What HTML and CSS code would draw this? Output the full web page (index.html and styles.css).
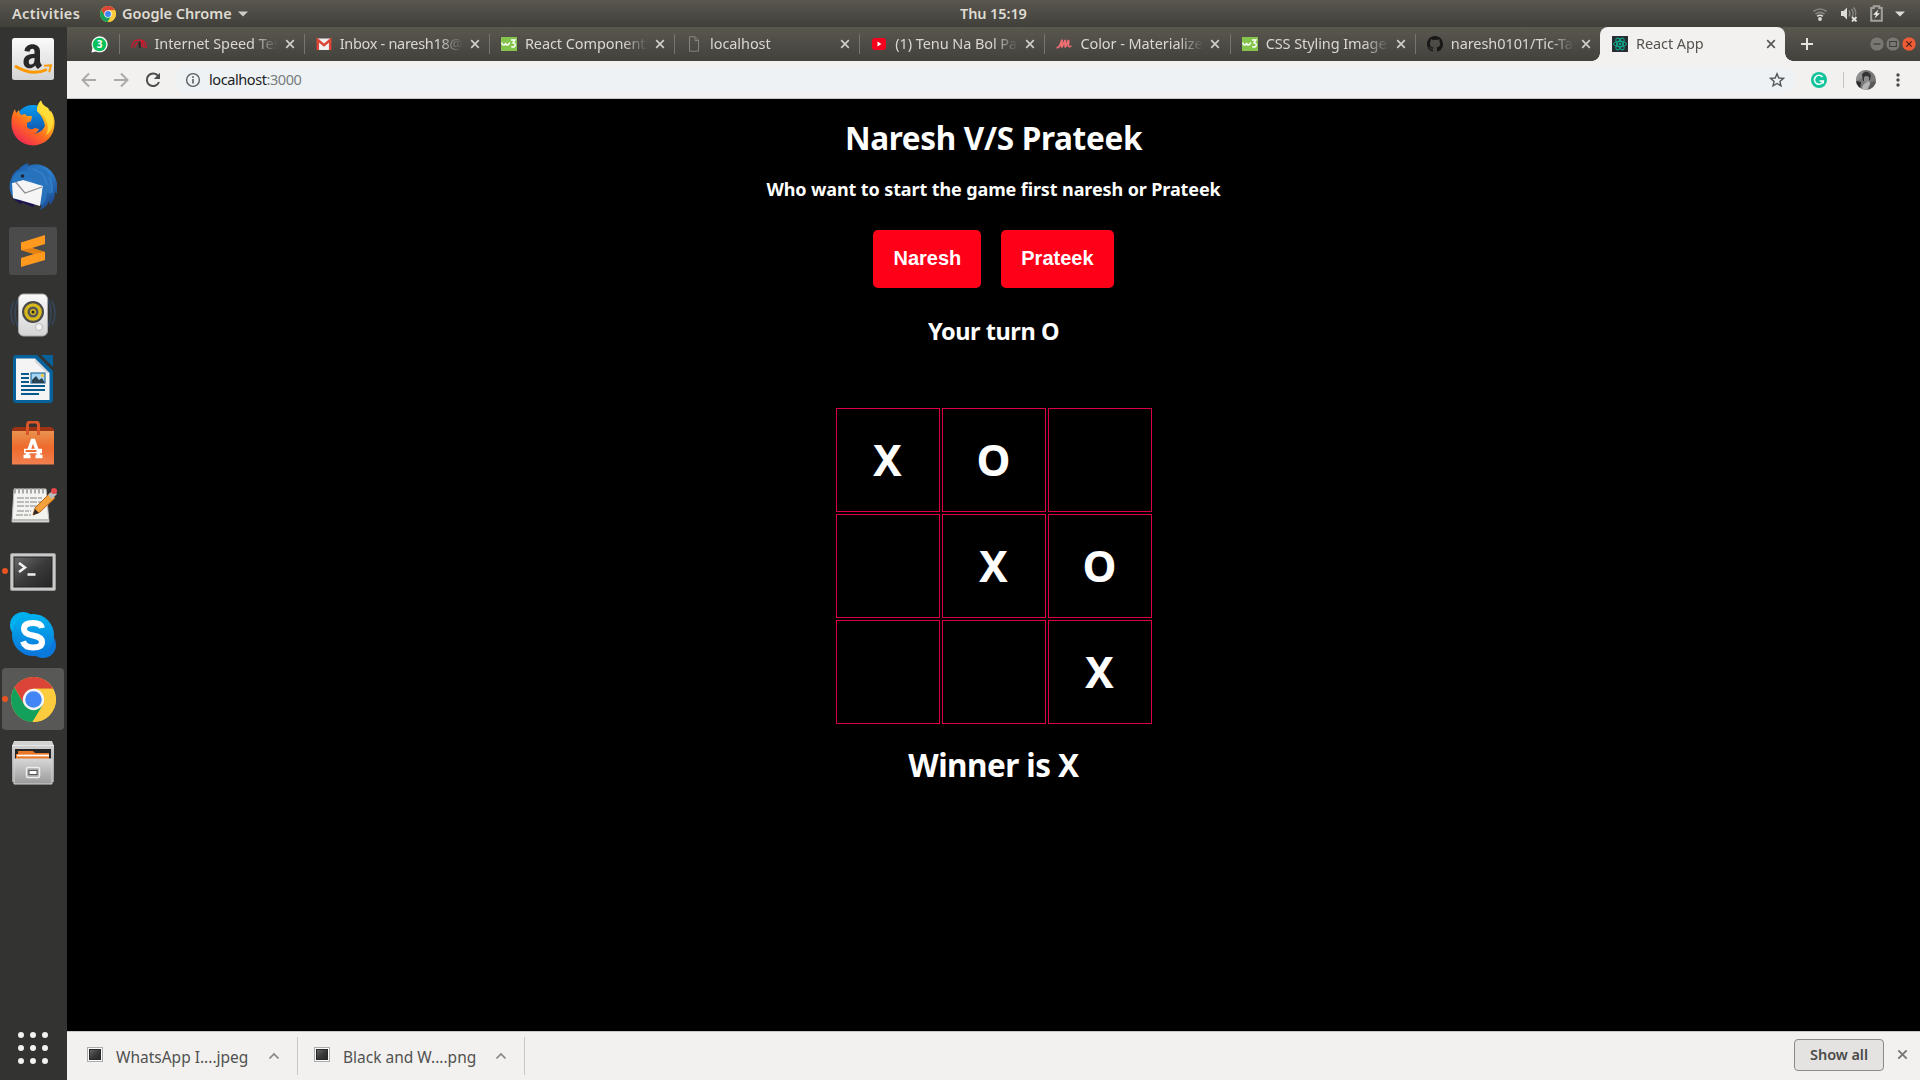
FILE: index.html
```
<!DOCTYPE html>
<html lang="en">
<head>
<meta charset="utf-8">
<title>React App</title>
<link rel="stylesheet" href="styles.css">
</head>
<body>
<svg class="defs" width="0" height="0">
  <defs>
    <linearGradient id="gPaper" x2="0" y2="1"><stop offset="0" stop-color="#fafafa"/><stop offset="1" stop-color="#d4d4d4"/></linearGradient>
    <linearGradient id="gFox" x1="0.9" y1="0" x2="0.2" y2="1"><stop offset="0" stop-color="#fff04a"/><stop offset=".35" stop-color="#ffb81c"/><stop offset=".62" stop-color="#ff6a1f"/><stop offset="1" stop-color="#f0205a"/></linearGradient>
    <linearGradient id="gGlobe" x2="0" y2="1"><stop offset="0" stop-color="#0a9cf0"/><stop offset="1" stop-color="#123c94"/></linearGradient>
    <linearGradient id="gBird" x1="0" x2="1" y2="1"><stop offset="0" stop-color="#16539f"/><stop offset=".5" stop-color="#2f82d0"/><stop offset="1" stop-color="#173a80"/></linearGradient>
    <linearGradient id="gBag" x2="0" y2="1"><stop offset="0" stop-color="#e9924f"/><stop offset=".5" stop-color="#ee6a2c"/><stop offset="1" stop-color="#f08050"/></linearGradient>
    <linearGradient id="gTerm" x1="0" x2="1" y2="1"><stop offset="0" stop-color="#6b6b6b"/><stop offset=".5" stop-color="#3a3a3a"/><stop offset="1" stop-color="#242424"/></linearGradient>
    <linearGradient id="gSkype" x2="0" y2="1"><stop offset="0" stop-color="#00b4f0"/><stop offset="1" stop-color="#0a74da"/></linearGradient>
    <linearGradient id="gCab" x2="0" y2="1"><stop offset="0" stop-color="#d6d6d6"/><stop offset="1" stop-color="#9a9a9a"/></linearGradient>
    <symbol id="chrome" viewBox="0 0 44 44">
      <circle cx="22" cy="22" r="22" fill="#f9cb3c"/>
      <path d="M22 22L3.5 10A22 22 0 0 1 41.2 11.5H22Z" fill="#db4437"/>
      <path d="M3.5 10.2A22 22 0 0 0 21 44L31.5 27 12.5 26Z" fill="#12a05b"/>
      <path d="M22 11.5h19.2A22 22 0 0 1 21 44L31.5 27Z" fill="#fccb3e"/>
      <path d="M3.5 10.2L12.5 26 22 11.5Z" fill="#db4437"/>
      <circle cx="22" cy="22" r="10.4" fill="#f4f4f4"/><circle cx="22" cy="22" r="8.1" fill="#4285f4"/>
    </symbol>
    <symbol id="w3" viewBox="0 0 16 14">
      <rect width="16" height="14" fill="#84c44c"/>
      <path d="M.7 5.500Q1.300 8.500 3 8 4.500 7.500 4.600 5.800 5 8.500 6.500 8 8 7.500 8.800 5.500M10 3h4L12 5.800Q14.600 6.200 14.200 8.500 13.500 11 10.300 9.500" fill="none" stroke="#fff" stroke-width="1.400"/>
    </symbol>
    <symbol id="close" viewBox="0 0 10 10"><path d="M1.2 1.2l7.6 7.6M8.8 1.2L1.2 8.8" fill="none" stroke="currentColor" stroke-width="1.7"/></symbol>
    <symbol id="picture" viewBox="0 0 16 15"><rect x=".5" y=".5" width="15" height="14" fill="#fafafa" stroke="#aaacae"/><rect x="2.500" y="2.500" width="11" height="10" fill="url(#gTerm)" stroke="#292929"/></symbol>
    <symbol id="up" viewBox="0 0 12 8"><path d="M1.5 6.5L6 2l4.500 4.500" fill="none" stroke="#858585" stroke-width="1.700"/></symbol>
  </defs>
</svg>

<div class="desktop">
  <header class="topbar">
    <div class="topbar-left">
      <span class="activities">Activities</span>
      <svg width="16" height="16"><use href="#chrome"/></svg>
      <span class="app-name">Google Chrome</span>
      <svg width="10" height="6" viewBox="0 0 10 6"><path d="M0 .5h10L5 5.500Z" fill="#cfcdc8"/></svg>
    </div>
    <div class="clock">Thu 15:19</div>
    <div class="topbar-right">
      <svg width="16" height="16" viewBox="0 0 16 16" fill="none" stroke-width="1.700"><path d="M1.500 5.500Q8 .5 14.500 5.500M3.500 8.200Q8 4.600 12.500 8.200" stroke="#85837d"/><path d="M5.200 10.200Q8 8.300 10.800 10.200" stroke="#dedcd7"/><circle cx="8" cy="13" r="1.900" fill="#dedcd7"/></svg>
      <svg width="18" height="16" viewBox="0 0 18 16" fill="none"><path d="M1 5h2.500L7 1.500v12L3.500 10H1Z" fill="#dedcd7"/><path d="M9 4.500q2 3 0 6M11.500 3q3 4 .5 8M13.500 1.500q3.500 4 1.800 8" stroke="#8b8983" stroke-width="1.300"/><path d="M12 11l4.500 4.500M16.500 11L12 15.500" stroke="#e4e2dd" stroke-width="1.800"/></svg>
      <svg width="13" height="17" viewBox="0 0 13 17"><path d="M1.200 3h2.500V1.300h5.600V3h2.500v12.700H1.200Z" fill="none" stroke="#a3a19b" stroke-width="2"/><path d="M8.500 4.500L3 9.800h3L4.500 13.500 10 8.300H7Z" fill="#efeeea"/></svg>
      <svg width="10" height="6" viewBox="0 0 10 6"><path d="M0 .5h10L5 5.500Z" fill="#dedcd7"/></svg>
    </div>
  </header>

  <div class="workspace">
    <nav class="dock">
      <div class="dock-item"><svg width="44" height="44" viewBox="0 0 44 44"><rect x="1" y="1" width="42" height="42" rx="2.500" fill="url(#gPaper)"/><path d="M13.500 14C14 5 29 5 29 14v10q0 2.500 2 4.500l-4 3.500q-2-1.500-2.800-3.500C20 33.500 12.500 31.500 12.500 25c0-6.500 5.500-8 11-8.200V14.500c0-3.800-4.400-3.500-5 .2Zm10 7c-3.500 0-5.700 1-5.700 4 0 4 5.700 3.500 5.700-2Z" fill="#282828"/><path d="M4 29q17 10.500 32 3.500" fill="none" stroke="#ff9900" stroke-width="3"/><path d="M33 28.800l7-.5-1.800 7" fill="none" stroke="#ff9900" stroke-width="2"/></svg></div>
      <div class="dock-item"><svg width="46" height="46" viewBox="0 0 46 46"><circle cx="23" cy="23" r="18" fill="url(#gGlobe)"/><path d="M27 11Q27 4 31 .5 32 5 38 8l1 4 2-1q4 6 3.500 13A21.500 21.500 0 0 1 1.500 24Q1 15 5 9l1 4 3-3q0 3 2 5l4-1 2 2h5l-1 5-4 2v4q3 4 8 1l4 1q-2 5-8 5Q31 34 35 26 34 18 27 11Z" fill="url(#gFox)"/><path d="M27 11Q27 4 31 .5 32 5 38 8q6 7 5 16-1 7-7 11 4-8 0-15Q34 15 27 11Z" fill="#ffe13a" opacity=".8"/></svg></div>
      <div class="dock-item"><svg width="48" height="48" viewBox="0 0 48 48"><path d="M10 6Q15 0 20 .5L18 3Q32-2 42 8 50 17 48 31l-2-2q0 8-5 13l-1-4q-2 6-9 9l2-5H22L5 36Q-2 26 2 16 4 9 10 6Z" fill="url(#gBird)"/><path d="M4 36l9 6-1-3 12 5 4-6Z" fill="#1b1450"/><path d="M3 20L14 17 34 23 31 43 4 35Z" fill="#f5f5f6"/><path d="M5 17L16 30 33 24" fill="none" stroke="#8a8d94" stroke-width="1.200"/><path d="M9 9Q20 6 19 13L13 17 3 20Q3 13 9 9Z" fill="#2576bd"/><circle cx="13.500" cy="13" r="1.800" fill="#223"/><path d="M19 12Q26 24 34 21L32 43Q38 37 38 29l4 2Q45 18 38 8 29 2 18 4Z" fill="#2871bb"/><path d="M24 6q12 3 14 16M40 14q4 8 3 16" stroke="#3480c8" stroke-width="1.500" fill="none"/></svg></div>
      <div class="dock-item"><svg width="48" height="48" viewBox="0 0 48 48"><rect width="48" height="48" rx="3" fill="#4b4b4b"/><path d="M12 15.500L36 8v9L23 21l13 4v8L12 40v-9l13-4-13-4Z" fill="#ff9a1f"/><path d="M12 23l13 4 11-2-13-4Z" fill="#e47f12"/></svg></div>
      <div class="dock-item"><svg width="48" height="48" viewBox="0 0 48 48"><g fill="none" stroke="#36465a" stroke-width="1.700"><path d="M9 8q-6 14 0 28M5 10q-6 12 0 24M39 8q6 14 0 28M43 10q6 12 0 24"/></g><rect x="9.500" y="3" width="29" height="42" rx="5" fill="url(#gPaper)" stroke="#a8a8a8"/><circle cx="24" cy="21" r="11" fill="#4b4b4b"/><circle cx="24" cy="21" r="8.800" fill="#d8b91c"/><circle cx="24" cy="21" r="5.500" fill="#565656"/><circle cx="24" cy="21" r="3" fill="#d8b91c"/><circle cx="24" cy="21" r="1.500" fill="#222"/><circle cx="30" cy="36" r="3.500" fill="#f2f2f2" stroke="#bbb"/></svg></div>
      <div class="dock-item"><svg width="42" height="48" viewBox="0 0 42 48"><path d="M4 0H25L41 16V44q0 4-3 4H4q-3 0-3-4V4q0-4 3-4Z" fill="#07629c"/><path d="M29 0h12v12Z" fill="#07629c"/><path d="M4 3.500H23L37.500 18V45H4Z" fill="#f4f4f4"/><path d="M23 3.500L37.500 18H35L23 7Z" fill="#cfd4d8"/><g stroke="#075a8c" stroke-width="2"><path d="M9 19h8M9 23h8M9 27h8M9 31h24M9 35h24M9 39h18"/></g><rect x="19" y="18" width="14" height="10" fill="#a6d4f2" stroke="#075a8c"/><path d="M20 28v-3l4-4 3 4 3-2 3 5Z" fill="#2a4350"/><circle cx="30.500" cy="20.500" r="1.700" fill="#f5c542"/></svg></div>
      <div class="dock-item"><svg width="44" height="44" viewBox="0 0 44 44"><path d="M1 8l3-2h36l3 2v4H1Z" fill="#9c3414"/><rect x="1" y="10" width="42" height="33.500" fill="url(#gBag)"/><path d="M16.500 14V4q0-3 3-3h5q3 0 3 3v10" fill="none" stroke="#d9552a" stroke-width="3"/><path d="M12.500 35.500h7M24.500 35.500h7M15.500 36L21.300 19.500h1.400L28.500 36" fill="none" stroke="#fff" stroke-width="3.500"/><path d="M13 30h18" stroke="#fff" stroke-width="4.500"/><path d="M14.500 30h11" stroke="#eb6e32" stroke-width="2"/></svg></div>
      <div class="dock-item"><svg class="notes" width="48" height="38" viewBox="0 0 48 38"><path d="M5 3h32l3 33H3Z" fill="#f3f3f0" stroke="#bbb"/><path d="M3.500 34h36" stroke="#bdbdb8" stroke-width="2"/><path d="M5 5h32" stroke="#aaa" stroke-width="5" stroke-dasharray="2 2"/><path d="M8 12h26M8 16h24M8 20h22M8 25h14M7 29h15" stroke="#aaa" stroke-width="1.300" stroke-dasharray="7 1 4 1"/><path d="M24 29l2-7L41 7l5 5-15 14Z" fill="#f2a13c" stroke="#bc661c"/><path d="M24 29l2-6 4 4Z" fill="#2b2b2b"/><path d="M39 9l5-5 4 4-5 5Z" fill="#b8bdc0"/><circle cx="45" cy="5" r="3" fill="#e4494c"/></svg></div>
      <div class="dock-item running"><svg class="terminal" width="46" height="38" viewBox="0 0 46 38"><rect x=".5" y=".5" width="45" height="37" rx="1.500" fill="#c9c9c7" stroke="#9a9a9a"/><rect x="4" y="4" width="38" height="30" fill="url(#gTerm)" stroke="#222"/><path d="M9 10l6 4.500-6 4.500M17.500 21.500h8" fill="none" stroke="#f1f1f1" stroke-width="2.500"/></svg></div>
      <div class="dock-item"><svg width="46" height="46" viewBox="0 0 46 46"><circle cx="13" cy="13" r="13" fill="#00b0ee"/><circle cx="33" cy="33" r="13" fill="#0b78db"/><circle cx="23" cy="23" r="21" fill="url(#gSkype)"/><path d="M32 16Q31 11 23 11q-9 0-9 6 0 5 9 6.500 9 1.500 9 6.500 0 5.500-9 5.500-8 0-10-6" fill="none" stroke="#fff" stroke-width="6"/></svg></div>
      <div class="dock-item running focused"><svg width="45" height="45"><use href="#chrome"/></svg></div>
      <div class="dock-item"><svg width="42" height="44" viewBox="0 0 42 44"><path d="M2 0h38l2 5v36H0V5Z" fill="url(#gCab)"/><path d="M0 4.500h42" stroke="#e8e8e8"/><rect x="3" y="8" width="36" height="10" fill="#252525"/><path d="M6 10h15l2 2h14v8H4v-7h2Z" fill="#e97826"/><path d="M5 14.500h32" stroke="#fff" stroke-width="1.700"/><path d="M2 18h38v25H2Z" fill="url(#gCab)" stroke="#d5d5d5"/><rect x="14.500" y="26.500" width="13" height="10" rx="1.500" fill="#aaa" stroke="#eee" stroke-width="1.500"/><rect x="17" y="29.500" width="8" height="4" fill="#fff" stroke="#555"/></svg></div>
      <div class="apps"><i></i><i></i><i></i><i></i><i></i><i></i><i></i><i></i><i></i></div>
    </nav>

    <main class="browser">
      <div class="tabs">
        <div class="pinned"><svg width="17" height="17" viewBox="0 0 17 17"><path d="M.5 16.500L1.500 12A8 8 0 1 1 5 15.500Z" fill="#fff"/><circle cx="8.500" cy="8.500" r="6.800" fill="#09c15a"/><text x="8.500" y="12.200" class="badge">3</text></svg></div>
        <div class="tab"><svg width="16" height="16" viewBox="0 0 16 16"><path d="M.8 12Q.5 4.300 8 4T15.200 12M4 11.500Q4 7.500 7.500 7M10 4.500q3.200 3 3 7.500M9.500 6.500q1.500 2 1.500 4.500" fill="none" stroke="#cf1830" stroke-width="1.300"/><path d="M7.500 6h2v6H8Z" fill="#222"/></svg><span class="title">Internet Speed Test</span><svg class="x"><use href="#close"/></svg></div>
        <div class="tab"><svg width="16" height="16" viewBox="0 0 16 16"><path d="M1 2.500h14v11.500H1Z" fill="#f1efef"/><path d="M1.800 14V4L8 9.200 14.200 4v10" fill="none" stroke="#dc4436" stroke-width="2.500"/></svg><span class="title tight">Inbox - naresh18@</span><svg class="x"><use href="#close"/></svg></div>
        <div class="tab"><svg width="16" height="16"><use href="#w3"/></svg><span class="title">React Components</span><svg class="x"><use href="#close"/></svg></div>
        <div class="tab"><svg width="16" height="16" viewBox="0 0 16 16"><path d="M3.500 .7h5.500l3.500 3.500v11h-9ZM9 1v3.500h3.500" fill="none" stroke="#85837d"/></svg><span class="title">localhost</span><svg class="x"><use href="#close"/></svg></div>
        <div class="tab"><svg width="16" height="16" viewBox="0 0 16 16"><rect x="1" y="2" width="14" height="12" rx="3" fill="#f5001d"/><path d="M6.500 5.500v5L10.500 8Z" fill="#fff"/></svg><span class="title">(1) Tenu Na Bol Pa</span><svg class="x"><use href="#close"/></svg></div>
        <div class="tab"><svg width="16" height="16" viewBox="0 0 16 16"><path d="M.5 11.500Q3 12 4 9l1.500-4Q6.500 3 6 6L5.500 10Q5.500 12 6.500 10L8.500 5.500Q9.800 3 9.300 6L9 10Q9 12 10 10L11.800 5.500Q13 3 12.700 6L12.300 9.500Q12.500 11.500 15.500 10" fill="none" stroke="#ee6e73" stroke-width="1.700"/></svg><span class="title">Color - Materialize</span><svg class="x"><use href="#close"/></svg></div>
        <div class="tab"><svg width="16" height="16"><use href="#w3"/></svg><span class="title">CSS Styling Images</span><svg class="x"><use href="#close"/></svg></div>
        <div class="tab"><svg width="16" height="16" viewBox="0 0 16 16"><path d="M8 0C3.580 0 0 3.580 0 8c0 3.540 2.290 6.530 5.470 7.590.4.070.55-.17.55-.38 0-.19-.01-.82-.01-1.490-2.010.37-2.530-.49-2.690-.94-.09-.23-.48-.94-.82-1.130-.28-.15-.68-.52-.01-.53.63-.01 1.080.58 1.230.82.72 1.210 1.870.87 2.330.66.070-.52.280-.87.510-1.070-1.780-.2-3.640-.89-3.640-3.950 0-.87.310-1.590.820-2.150-.08-.2-.36-1.020.080-2.120 0 0 .67-.21 2.200.82.640-.18 1.320-.27 2-.27s1.360.09 2 .27c1.530-1.040 2.200-.82 2.200-.82.440 1.100.160 1.920.080 2.120.510.56.820 1.270.820 2.150 0 3.070-1.870 3.750-3.650 3.950.290.25.540.73.540 1.480 0 1.070-.010 1.930-.010 2.200 0 .21.150.46.550.38A8 8 0 0 0 16 8c0-4.420-3.580-8-8-8Z" fill="#191717"/></svg><span class="title">naresh0101/Tic-Tac</span><svg class="x"><use href="#close"/></svg></div>
        <div class="tab active"><svg width="16" height="16" viewBox="0 0 16 16"><rect width="16" height="16" fill="#282c34"/><g fill="none" stroke="#0fae8e"><ellipse cx="8" cy="8" rx="6.500" ry="2.600"/><ellipse cx="8" cy="8" rx="6.500" ry="2.600" transform="rotate(60 8 8)"/><ellipse cx="8" cy="8" rx="6.500" ry="2.600" transform="rotate(120 8 8)"/></g><circle cx="8" cy="8" r="1.200" fill="#0fae8e"/></svg><span class="title">React App</span><svg class="x"><use href="#close"/></svg></div>
        <svg class="new-tab" width="12" height="12" viewBox="0 0 12 12"><path d="M6 0v12M0 6h12" stroke="#e6e4df" stroke-width="2"/></svg>
        <div class="window-controls">
          <svg width="14" height="14" viewBox="0 0 14 14"><circle cx="7" cy="7" r="6.600" fill="#7a7872"/><path d="M3.500 7h7" stroke="#3d3c38" stroke-width="1.200"/></svg>
          <svg width="14" height="14" viewBox="0 0 14 14"><circle cx="7" cy="7" r="6.600" fill="#7a7872"/><rect x="3.700" y="4.500" width="6.600" height="5" fill="none" stroke="#3d3c38"/></svg>
          <svg width="14" height="14" viewBox="0 0 14 14"><circle cx="7" cy="7" r="6.700" fill="#ee5c36"/><path d="M4.300 4.300l5.400 5.400M9.700 4.300L4.300 9.700" stroke="#4a2016" stroke-width="1.200"/></svg>
        </div>
      </div>

      <div class="toolbar">
        <div class="nav-buttons">
          <svg width="16" height="16" viewBox="0 0 16 16"><path d="M15 8H2M8 1.500L1.500 8 8 14.500" fill="none" stroke="#aaa9a7" stroke-width="1.900"/></svg>
          <svg width="16" height="16" viewBox="0 0 16 16"><path d="M1 8h13M8 1.500L14.500 8 8 14.500" fill="none" stroke="#aaa9a7" stroke-width="1.900"/></svg>
          <svg width="16" height="16" viewBox="0 0 16 16"><path d="M13.200 4A6.300 6.300 0 1 0 14 10" fill="none" stroke="#4c4c4c" stroke-width="2"/><path d="M15 .8v6.200H8.800Z" fill="#4c4c4c"/></svg>
        </div>
        <div class="omnibox">
          <svg width="16" height="16" viewBox="0 0 16 16"><circle cx="8" cy="8" r="6.400" fill="none" stroke="#5a5e60" stroke-width="1.400"/><path d="M8 7v4.500M8 4.300v1.600" stroke="#5a5e60" stroke-width="1.600"/></svg>
          <span class="url">localhost<span class="port">:3000</span></span>
          <svg class="star" width="16" height="16" viewBox="0 0 16 16"><path d="M8 1.800l1.800 4.200 4.700.4-3.600 3 1.100 4.500L8 11.500 4 13.900l1.100-4.500-3.600-3 4.700-.4Z" fill="none" stroke="#50575b" stroke-width="1.400"/></svg>
        </div>
        <svg class="grammarly" width="16" height="16" viewBox="0 0 16 16"><circle cx="8" cy="8" r="8" fill="#11c39a"/><path d="M11.500 5A4.500 4.500 0 1 0 12.300 9H8.500M12.300 8.500v3" fill="none" stroke="#fff" stroke-width="1.500"/></svg>
        <i class="divider"></i>
        <svg class="avatar" width="20" height="20" viewBox="0 0 20 20"><clipPath id="c"><circle cx="10" cy="10" r="10"/></clipPath><g clip-path="url(#c)"><path d="M0 0h20v20H0Z" fill="#777"/><path d="M0 0h8L6 8 0 11Z" fill="#8f8f8f"/><path d="M6 4q5-5 9 1l-1 5-7 1Z" fill="#333"/><path d="M8 7q3-2 5 0v4l-3 3-2-3Z" fill="#8a8a8a"/><path d="M6 20q0-6 4-7l3-2 1 3-3 6Z" fill="#b5b5b5"/><path d="M12 20l3-8 5-1v9Z" fill="#5a5a5a"/><path d="M0 11l5 1-1 8H0Z" fill="#2c2c2c"/></g></svg>
        <svg width="4" height="14" viewBox="0 0 4 14" fill="#4c4c4c"><circle cx="2" cy="2" r="1.700"/><circle cx="2" cy="7" r="1.700"/><circle cx="2" cy="12" r="1.700"/></svg>
      </div>

      <section class="game">
        <h1>Naresh V/S Prateek</h1>
        <h3>Who want to start the game first naresh or Prateek</h3>
        <div class="players"><button>Naresh</button><button>Prateek</button></div>
        <h2>Your turn O</h2>
        <div class="board">
          <div class="cell">X</div><div class="cell">O</div><div class="cell"></div>
          <div class="cell"></div><div class="cell">X</div><div class="cell">O</div>
          <div class="cell"></div><div class="cell"></div><div class="cell">X</div>
        </div>
        <div class="winner">Winner is X</div>
      </section>

      <footer class="downloads">
        <div class="download"><svg width="16" height="15"><use href="#picture"/></svg><span>WhatsApp I....jpeg</span><svg class="up" width="12" height="8"><use href="#up"/></svg></div>
        <div class="download"><svg width="16" height="15"><use href="#picture"/></svg><span>Black and W....png</span><svg class="up" width="12" height="8"><use href="#up"/></svg></div>
        <button class="show-all">Show all</button>
        <svg class="dismiss" width="11" height="11"><use href="#close"/></svg>
      </footer>
    </main>
  </div>
</div>
</body>
</html>
```
FILE: styles.css
```
* { box-sizing: border-box; }
body { margin: 0; background: #000; font-family: "Noto Sans", sans-serif; overflow: hidden; }
svg { display: block; flex: none; }
.defs { position: absolute; }
.desktop { width: 1920px; height: 1080px; display: flex; flex-direction: column; }

.topbar { height: 27px; flex: none; display: grid; grid-template-columns: 1fr auto 1fr; align-items: center; background: linear-gradient(#5a574f, #403f3a); color: #dfdbd2; font-size: 14.500px; font-weight: 600; line-height: 24px; white-space: nowrap; }
.topbar-left { display: flex; align-items: center; padding-left: 12px; }
.topbar-left span, .clock { padding-bottom: 2px; }
.activities { width: 88px; letter-spacing: .35px; }
.app-name { width: 110px; margin: 0 6px 0 6px; }
.clock { width: 67px; letter-spacing: -.1px; position: relative; left: 34px; margin-left: -34px; margin-right: -34px; }
.topbar-right { display: flex; align-items: center; justify-content: flex-end; padding-right: 15px; gap: 12px; }

.workspace { flex: 1; display: flex; min-height: 0; }
.dock { width: 67px; flex: none; background: #333331; display: flex; flex-direction: column; }
.dock-item { width: 62px; height: 62px; margin: 1px 0 1px 2px; border-radius: 4px; display: flex; align-items: center; justify-content: center; flex: none; position: relative; }
.notes { margin-top: -4px; }
.terminal { margin-top: 2px; }
.focused { background: #585856; }
.running::before { content: ""; position: absolute; left: 0; top: 28px; width: 6px; height: 6px; border-radius: 50%; background: #e95420; }
.apps { margin: auto 0 16px 17.500px; display: grid; grid-template-columns: repeat(3, 6.500px); gap: 6.500px 5.500px; }
.apps i { width: 6.500px; height: 6.500px; border-radius: 50%; background: #f2f2f0; }

.browser { flex: 1; min-width: 0; display: flex; flex-direction: column; }
.tabs { height: 34px; flex: none; display: flex; align-items: center; background: linear-gradient(#5a574f, #42413c); color: #dad7d0; }
.pinned { width: 51.500px; padding-left: 23.500px; }
.badge { font: bold 10px "Noto Sans", sans-serif; fill: #fff; text-anchor: middle; }
.tab { width: 185.200px; height: 34px; display: flex; align-items: center; padding-left: 12px; position: relative; flex: none; }
.tab::before { content: ""; position: absolute; left: 0; top: 7px; height: 20px; width: 1px; background: #77756e; }
.title { width: 123px; height: 34px; margin-left: 8px; font-size: 14.500px; letter-spacing: -.08px; line-height: 32px; white-space: nowrap; overflow: hidden; -webkit-mask-image: linear-gradient(90deg, #000 80%, transparent); mask-image: linear-gradient(90deg, #000 80%, transparent); }
.tight { letter-spacing: -.3px; }
.x { width: 10px; height: 10px; margin-left: 7px; color: #d0cec8; }
.active { background: #f2f1ef; color: #55534e; border-radius: 8px 8px 0 0; }
.active::before { left: -8px; top: 26px; width: 8px; height: 8px; background: radial-gradient(circle at 0 0, transparent 7.500px, #f2f1ef 8px); }
.active::after { content: ""; position: absolute; right: -8px; top: 26px; width: 8px; height: 8px; background: radial-gradient(circle at 100% 0, transparent 7.500px, #f2f1ef 8px); }
.active .x { color: #5b5956; }
.new-tab { margin-left: 16px; }
.window-controls { display: flex; gap: 2px; margin-left: auto; padding-right: 4px; }

.toolbar { height: 38px; flex: none; display: flex; align-items: center; background: #f2f1ef; border-bottom: 1px solid #c9c8c6; padding: 0 19px 0 14px; }
.nav-buttons { display: flex; gap: 16px; width: 95px; }
.omnibox { width: 1619px; height: 28px; border-radius: 14px; background: #eef2f4; display: flex; align-items: center; padding: 0 10px 0 9px; }
.url { margin-left: 8px; padding-bottom: 2px; font-size: 14.500px; letter-spacing: -.42px; color: #202324; line-height: 26px; }
.port { color: #777d80; }
.star { margin-left: auto; }
.grammarly { margin-left: 16px; }
.divider { width: 1px; height: 16px; background: #c4c4c2; margin-left: 16px; }
.avatar { margin: 0 20px 0 12px; }

.game { flex: 1; min-height: 0; background: #000; color: #fff; display: flex; flex-direction: column; align-items: center; white-space: nowrap; }
h1, h2, h3 { margin: 0; font-weight: 700; }
h1 { font-size: 31.500px; line-height: 40px; margin-top: 19px; letter-spacing: -.32px; }
h3 { font-size: 18px; line-height: 24px; margin-top: 19px; letter-spacing: -.11px; }
.players { display: flex; gap: 20px; margin-top: 29px; }
.players button { height: 58px; padding: 0 20px 2px; border: 0; border-radius: 5px; background: #ff0019; color: #fff; font: bold 20px "Liberation Sans", Arial, sans-serif; }
h2 { font-size: 23.500px; line-height: 30px; margin-top: 28px; letter-spacing: -.45px; }
.board { display: grid; grid-template-columns: repeat(3, 104px); grid-auto-rows: 104px; gap: 2px; margin-top: 62px; }
.cell { border: 1px solid #dc0046; display: flex; align-items: center; justify-content: center; padding-bottom: 2px; font-size: 43px; font-weight: 700; line-height: 1; }
.winner { font-size: 31.500px; font-weight: 700; line-height: 40px; margin-top: 21px; letter-spacing: -.55px; }

.downloads { height: 49px; flex: none; display: flex; align-items: center; background: #f2f1ef; border-top: 1px solid #c9c8c6; color: #515151; }
.download { width: 227px; height: 38px; display: flex; align-items: center; padding-left: 16px; border-right: 1px solid #c8c7c5; font-size: 15.500px; letter-spacing: 0; white-space: nowrap; }
.download:first-child { width: 231px; padding-left: 20px; }
.download > svg:first-child { margin-bottom: 3px; }
.download span { width: 133px; margin: 2px 19px 0 13px; }
.show-all { width: 90px; height: 32px; margin: 0 0 3px auto; padding: 0 0 1px; border: 1px solid #8b8a88; border-radius: 4px; background: #e4e3e1; color: #4b4b4b; font: 600 14.500px "Noto Sans", sans-serif; letter-spacing: -.05px; }
.dismiss { margin: 0 12px 3px 13px; color: #777; }
```
